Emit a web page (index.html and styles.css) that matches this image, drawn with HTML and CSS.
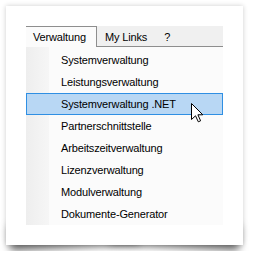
FILE: index.html
```html
<!DOCTYPE html>
<html lang="de">
<head>
    <meta charset="UTF-8">
    <title>Menü Verwaltung</title>
    <link rel="stylesheet" href="styles.css">
</head>
<body>
    <div class="card">
        <div class="menubar">
            <div class="menu-tab active">Verwaltung</div>
            <div class="menu-tab">My Links</div>
            <div class="menu-tab">?</div>
            <div class="menu-rest"></div>
        </div>

        <ul class="dropdown">
            <li class="dropdown-item">Systemverwaltung</li>
            <li class="dropdown-item">Leistungsverwaltung</li>
            <li class="dropdown-item hover">
                Systemverwaltung .NET
                <svg class="cursor" width="13" height="20" viewBox="0 0 13 20">
                    <path d="M0.5 0.5 L0.5 16.5 L4.5 12.8 L7.3 18.8 L9.6 17.8 L6.9 11.8 L11.8 11.8 Z" fill="#fff" stroke="#000" stroke-width="1" stroke-linejoin="miter"/>
                </svg>
            </li>
            <li class="dropdown-item">Partnerschnittstelle</li>
            <li class="dropdown-item">Arbeitszeitverwaltung</li>
            <li class="dropdown-item">Lizenzverwaltung</li>
            <li class="dropdown-item">Modulverwaltung</li>
            <li class="dropdown-item">Dokumente-Generator</li>
        </ul>
    </div>
</body>
</html>
```

FILE: styles.css
```css
:root {
    --bar-color: #f0f0f0;
    --line-color: #8e8e8e;
    --menu-bg: #fbfbfb;
    --hover-bg: #b8d7f4;
    --hover-border: #2f8fe3;
}

* {
    margin: 0;
    padding: 0;
    box-sizing: border-box;
}

body {
    font-family: 'Liberation Sans', Arial, sans-serif;
    font-size: 11px;
    letter-spacing: -0.15px;
    color: #000;
    background: #fff;
    padding: 6px;
}

.card {
    position: relative;
    width: 237px;
    background: #fff;
    padding: 20px;
    box-shadow: 0 0 5px rgba(0, 0, 0, 0.2);
}

/* gebogener Schatten an den unteren Ecken */
.card::before,
.card::after {
    content: '';
    position: absolute;
    z-index: -1;
    bottom: 12px;
    width: 55%;
    height: 24px;
    box-shadow: 0 14px 9px rgba(0, 0, 0, 0.6);
}

.card::before {
    left: 3px;
    transform: rotate(-3deg);
}

.card::after {
    right: 3px;
    transform: rotate(3deg);
}

.menubar {
    display: flex;
    height: 21px;
    background: var(--bar-color);
}

.menu-tab {
    line-height: 20px;
    padding: 0 9px 0 8px;
    border-top: 1px solid transparent;
    border-bottom: 1px solid var(--line-color);
}

.menu-tab.active {
    background: var(--menu-bg);
    padding: 0 10px 0 7px;
    border-top-color: var(--line-color);
    border-right: 1px solid var(--line-color);
    border-bottom: none;
}

.menu-rest {
    flex: 1;
    border-bottom: 1px solid var(--line-color);
}

.dropdown {
    list-style: none;
    padding-top: 2px;
    background: linear-gradient(to right, #eeeeee 0, #f6f6f6 23px, var(--menu-bg) 23px);
}

.dropdown-item {
    position: relative;
    height: 22px;
    line-height: 20px;
    padding-left: 34px;
    border: 1px solid transparent;
}

.dropdown-item.hover {
    background: var(--hover-bg);
    border-color: var(--hover-border);
}

.cursor {
    position: absolute;
    left: 164px;
    top: 9px;
}
```
